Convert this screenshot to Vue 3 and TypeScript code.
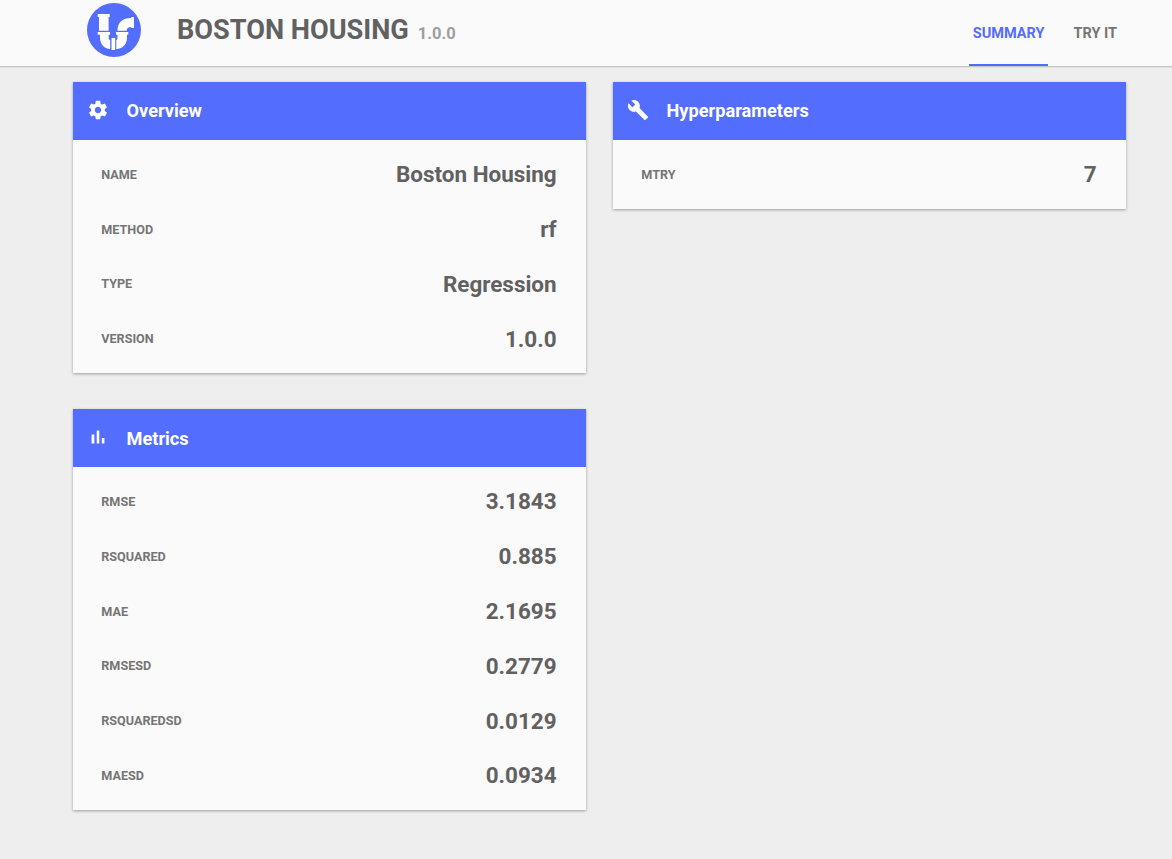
<script setup lang="ts">
interface Item {
  label: string
  value: string
}
interface Card {
  title: string
  icon: string
  items: Item[]
}

const gear =
  'M19.43 12.98c.04-.32.07-.64.07-.98s-.03-.66-.07-.98l2.11-1.65c.19-.15.24-.42.12-.64l-2-3.46c-.12-.22-.39-.3-.61-.22l-2.49 1c-.52-.4-1.08-.73-1.69-.98l-.38-2.65C14.46 2.18 14.25 2 14 2h-4c-.25 0-.46.18-.49.42l-.38 2.65c-.61.25-1.17.59-1.69.98l-2.49-1c-.23-.09-.49 0-.61.22l-2 3.46c-.13.22-.07.49.12.64l2.11 1.65c-.04.32-.07.65-.07.98s.03.66.07.98l-2.11 1.65c-.19.15-.24.42-.12.64l2 3.46c.12.22.39.3.61.22l2.49-1c.52.4 1.08.73 1.69.98l.38 2.65c.03.24.24.42.49.42h4c.25 0 .46-.18.49-.42l.38-2.65c.61-.25 1.17-.59 1.69-.98l2.49 1c.23.09.49 0 .61-.22l2-3.46c.12-.22.07-.49-.12-.64l-2.11-1.65zM12 15.5c-1.93 0-3.5-1.57-3.5-3.5s1.57-3.5 3.5-3.5 3.5 1.57 3.5 3.5-1.57 3.5-3.5 3.5z'
const wrench =
  'M22.7 19l-9.1-9.1c.9-2.3.4-5-1.5-6.9-2-2-5-2.4-7.4-1.3L9 6 6 9 1.6 4.7C.4 7.1.9 10.1 2.9 12.1c1.9 1.9 4.6 2.4 6.9 1.5l9.1 9.1c.4.4 1 .4 1.4 0l2.3-2.3c.5-.4.5-1.1.1-1.4z'
const bars = 'M5 9.2h3V19H5zM10.6 5h2.8v14h-2.8zm5.6 8H19v6h-2.8z'

const columns: Card[][] = [
  [
    {
      title: 'Overview',
      icon: gear,
      items: [
        { label: 'NAME', value: 'Boston Housing' },
        { label: 'METHOD', value: 'rf' },
        { label: 'TYPE', value: 'Regression' },
        { label: 'VERSION', value: '1.0.0' },
      ],
    },
    {
      title: 'Metrics',
      icon: bars,
      items: [
        { label: 'RMSE', value: '3.1843' },
        { label: 'RSQUARED', value: '0.885' },
        { label: 'MAE', value: '2.1695' },
        { label: 'RMSESD', value: '0.2779' },
        { label: 'RSQUAREDSD', value: '0.0129' },
        { label: 'MAESD', value: '0.0934' },
      ],
    },
  ],
  [{ title: 'Hyperparameters', icon: wrench, items: [{ label: 'MTRY', value: '7' }] }],
]
</script>

<template>
  <div class="page">
    <header class="bar">
      <svg class="logo" viewBox="0 0 54 54" aria-hidden="true">
        <circle cx="27" cy="27" r="27" fill="#536dfe" />
        <g fill="#fff">
          <path d="M10.7 11h12v3h-1.1v13.7H12V14h-1.3z" />
          <path d="M10.7 29H23v2.8h-1.3v3.5q0 1.300 1.500 2V46C17 45.800 13 41 13 34.5v-2.7h-2.3z" />
          <path d="M24.500 35h3.700v12h-3.700z" />
          <path d="M29 29h12.300v2.800H40v2.700C40 41 36 45.800 29.300 46v-8.700q1.200-.7 1.200-2v-3.500H29z" />
          <path d="M30.5 27.700C30.500 19.500 35.5 15 44.3 15v-1H47v11h-2.700v-1q-4.600 0-4.600 3.700z" />
        </g>
      </svg>
      <h1 class="title">BOSTON HOUSING</h1>
      <span class="version">1.0.0</span>
      <nav class="tabs">
        <a class="tab active">SUMMARY</a>
        <a class="tab">TRY IT</a>
      </nav>
    </header>
    <main class="columns">
      <div v-for="(column, c) in columns" :key="c" class="column">
        <section v-for="card in column" :key="card.title" class="card">
          <div class="head">
            <svg class="icon" viewBox="0 0 24 24" aria-hidden="true"><path :d="card.icon" /></svg>
            <h2>{{ card.title }}</h2>
          </div>
          <dl>
            <div v-for="item in card.items" :key="item.label" class="row">
              <dt>{{ item.label }}</dt>
              <dd>{{ item.value }}</dd>
            </div>
          </dl>
        </section>
      </div>
    </main>
  </div>
</template>

<style>
body {
  background: #eee;
}
</style>

<style scoped>
.page {
  min-height: 859px;
  background: #eee;
  font-family: Roboto, sans-serif;
  font-weight: 700;
}
.bar {
  box-sizing: border-box;
  height: 67px;
  padding: 0 51px 0 87px;
  display: flex;
  background: #fafafa;
  border-bottom: 1px solid #c4c4c4;
  box-shadow: 0 1px 1px rgba(0, 0, 0, 0.04);
}
.logo {
  width: 54px;
  height: 54px;
  margin-top: 3px;
}
.title {
  margin: 0 0 0 36px;
  font-size: 27.15px;
  line-height: 60px;
  color: #616161;
}
.version {
  margin-left: 8.8px;
  font-size: 16.5px;
  line-height: 67px;
  color: #9e9e9e;
}
.tabs {
  display: flex;
  gap: 21px;
  margin-left: auto;
}
.tab {
  box-sizing: border-box;
  height: 66px;
  padding: 0 4px;
  font-size: 14.5px;
  line-height: 67.5px;
  color: #757575;
}
.active {
  color: #536dfe;
  border-bottom: 2px solid #536dfe;
}
.columns {
  display: flex;
  gap: 27px;
  padding: 15px 0 0 73px;
  align-items: flex-start;
}
.column {
  width: 513px;
  display: flex;
  flex-direction: column;
  gap: 36px;
}
.card {
  background: #fafafa;
  box-shadow: 0 1px 3px rgba(0, 0, 0, 0.24), 0 1px 2px rgba(0, 0, 0, 0.12);
}
.head {
  height: 58px;
  display: flex;
  background: #536dfe;
  color: #fff;
}
.icon {
  width: 22px;
  height: 22px;
  margin: 17px 0 0 14px;
  fill: currentColor;
}
.head h2 {
  margin: 0.35px 0 0 17.5px;
  font-size: 18.2px;
  line-height: 58px;
}
dl {
  margin: 0;
  padding: 6.9px 29.4px 7.25px 28.3px;
}
.row {
  height: 54.78px;
  display: flex;
  align-items: center;
  justify-content: space-between;
}
dt {
  font-size: 12.6px;
  color: #757575;
}
dd {
  margin: 0;
  font-size: 22.45px;
  color: #616161;
}
</style>
